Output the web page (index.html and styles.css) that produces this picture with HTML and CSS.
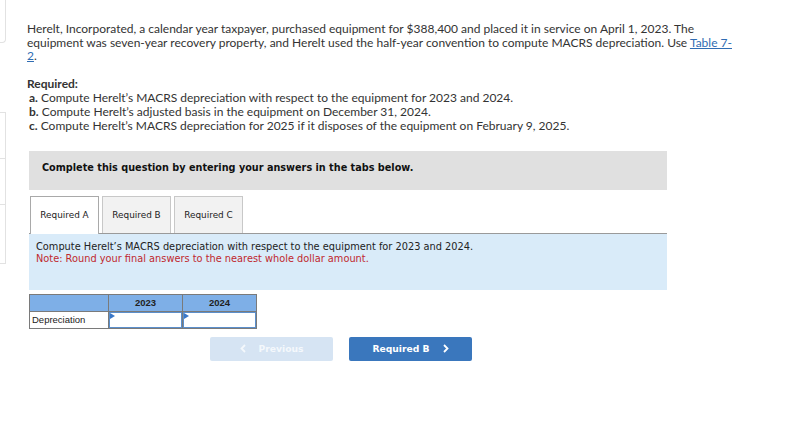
FILE: index.html
```html
<!DOCTYPE html>
<html>
<head>
<meta charset="utf-8">
<link rel="stylesheet" href="styles.css">
</head>
<body>
<div class="page">
  <aside class="rail">
    <div class="card card-top"></div>
    <div class="card card-a"></div>
    <div class="card card-b"></div>
    <div class="card card-c"></div>
  </aside>
  <main class="main">
    <p class="intro">Herelt, Incorporated, a calendar year taxpayer, purchased equipment for $388,400 and placed it in service on April 1, 2023. The equipment was seven-year recovery property, and Herelt used the half-year convention to compute MACRS depreciation. Use <a class="link" href="#">Table 7-<br>2</a>.</p>
    <div class="req">
      <div class="req-title">Required:</div>
      <div class="req-item"><b>a.</b> Compute Herelt’s MACRS depreciation with respect to the equipment for 2023 and 2024.</div>
      <div class="req-item"><b>b.</b> Compute Herelt’s adjusted basis in the equipment on December 31, 2024.</div>
      <div class="req-item"><b>c.</b> Compute Herelt’s MACRS depreciation for 2025 if it disposes of the equipment on February 9, 2025.</div>
    </div>
    <div class="banner">Complete this question by entering your answers in the tabs below.</div>
    <div class="tabs">
      <div class="tab active">Required A</div>
      <div class="tab">Required B</div>
      <div class="tab">Required C</div>
    </div>
    <div class="panel">
      <div>Compute Herelt’s MACRS depreciation with respect to the equipment for 2023 and 2024.</div>
      <div class="note">Note: Round your final answers to the nearest whole dollar amount.</div>
    </div>
    <table class="grid">
      <tr class="head"><th class="label-col"></th><th>2023</th><th>2024</th></tr>
      <tr><td class="label">Depreciation</td><td class="inp"><span class="flag"></span></td><td class="inp"><span class="flag"></span></td></tr>
    </table>
    <div class="nav">
      <button class="btn prev"><svg class="chev" width="6" height="9" viewBox="0 0 6 9"><polyline points="5,1 1.5,4.5 5,8" fill="none" stroke="currentColor" stroke-width="1.8"/></svg>Previous</button>
      <button class="btn next">Required B<svg class="chev" width="6" height="9" viewBox="0 0 6 9"><polyline points="1,1 4.5,4.5 1,8" fill="none" stroke="currentColor" stroke-width="1.8"/></svg></button>
    </div>
  </main>
</div>
</body>
</html>
```
FILE: styles.css
```css
html, body { margin: 0; padding: 0; background: #fff; }
.page { display: flex; align-items: flex-start; width: 787px; height: 426px; overflow: hidden; }
.rail { width: 6px; flex: none; display: flex; flex-direction: column; }
.card { box-sizing: border-box; border: 1px solid #e2e2e2; border-left: none; width: 6px; }
.card-top { height: 43px; border-top: none; border-bottom-right-radius: 4px; margin-bottom: 69px; }
.card-a { height: 46px; border-bottom: none; }
.card-b { height: 46px; border-bottom: none; }
.card-c { height: 60px; }
.main { padding: 22px 0 0 21px; width: 640px; }
.intro { margin: 0; font-family: "Lato", "Liberation Sans", sans-serif; font-size: 12px; line-height: 13.5px; color: #333; width: 712px; }
.link { color: #2f6cb3; }
.req { margin-top: 14px; font-family: "Lato", "Liberation Sans", sans-serif; font-size: 12px; line-height: 14px; color: #333; }
.req-title { font-weight: bold; }
.req-item { padding-left: 2px; }
.banner { margin-top: 18px; margin-left: 2px; height: 39px; box-sizing: border-box; background: #e0e0e0; padding: 10px 13px; font-family: "DejaVu Sans", Verdana, sans-serif; font-weight: bold; font-size: 9.7px; line-height: 13px; color: #111; }
.tabs { display: flex; gap: 3px; margin-top: 6px; margin-left: 3px; height: 37px; }
.tab { box-sizing: border-box; width: 69px; height: 37px; border: 1px solid #c8c8c8; border-bottom: none; background: #f2f2f2; display: flex; align-items: center; justify-content: center; font-family: "DejaVu Sans", Verdana, sans-serif; font-size: 8.9px; color: #222; }
.tab.active { background: #fff; border-color: #a9a9a9; height: 38px; position: relative; z-index: 1; }
.panel { margin-left: 2px; height: 57px; box-sizing: border-box; background: #d9ebf9; border-top: 1px solid #9a9a9a; padding: 7px 7px; font-family: "DejaVu Sans", Verdana, sans-serif; font-size: 9.8px; line-height: 12px; color: #222; }
.note { color: #c0282d; }
.grid { margin-top: 4px; margin-left: 2px; border-collapse: collapse; font-family: "Liberation Sans", Arial, sans-serif; font-size: 9.5px; }
.grid th, .grid td { border: 1px solid #7a7a7a; padding: 0; height: 16px; }
.grid .head th { background: #7eafe7; color: #222; font-weight: bold; text-align: center; }
.label-col { width: 78px; }
.grid th:nth-child(2), .grid th:nth-child(3) { width: 73px; }
.label { padding-left: 2px !important; color: #222; text-align: left; }
.inp { position: relative; box-shadow: inset 0 0 0 1px #5b8fcc; background: #fff; }
.flag { position: absolute; left: 1px; top: 1px; width: 0; height: 0; border-top: 3px solid transparent; border-bottom: 3px solid transparent; border-left: 5px solid #3a78c9; }
.nav { display: flex; gap: 16px; margin-top: 8px; margin-left: 183px; }
.btn { box-sizing: border-box; width: 123px; height: 24px; border: none; border-radius: 2px; font-family: "DejaVu Sans", Verdana, sans-serif; font-weight: bold; font-size: 9.2px; color: #fff; display: flex; align-items: center; justify-content: center; gap: 13px; padding: 0; }
.prev { background: #d6e4f3; color: #f4f8fc; }
.next { background: #3a77bd; }
.chev { flex: none; }
```
